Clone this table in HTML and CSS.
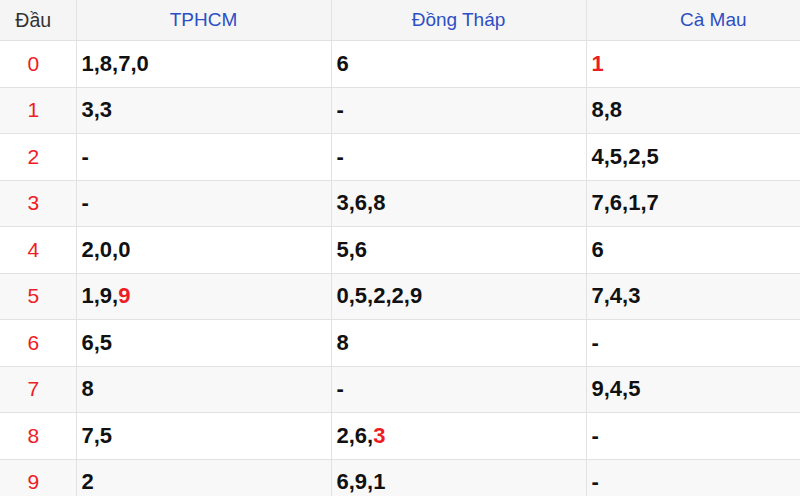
FILE: index.html
```html
<!DOCTYPE html>
<html lang="vi">
<head>
<meta charset="utf-8">
<link rel="stylesheet" href="styles.css">
</head>
<body>
<table class="loto">
  <colgroup>
    <col class="c-dau"><col class="c-prov"><col class="c-prov"><col class="c-last">
  </colgroup>
  <thead>
    <tr><th class="dau">Đầu</th><th>TPHCM</th><th>Đồng Tháp</th><th class="last">Cà Mau</th></tr>
  </thead>
  <tbody>
    <tr><td class="dau">0</td><td>1,8,7,0</td><td>6</td><td><span class="hit">1</span></td></tr>
    <tr><td class="dau">1</td><td>3,3</td><td>-</td><td>8,8</td></tr>
    <tr><td class="dau">2</td><td>-</td><td>-</td><td>4,5,2,5</td></tr>
    <tr><td class="dau">3</td><td>-</td><td>3,6,8</td><td>7,6,1,7</td></tr>
    <tr><td class="dau">4</td><td>2,0,0</td><td>5,6</td><td>6</td></tr>
    <tr><td class="dau">5</td><td>1,9,<span class="hit">9</span></td><td>0,5,2,2,9</td><td>7,4,3</td></tr>
    <tr><td class="dau">6</td><td>6,5</td><td>8</td><td>-</td></tr>
    <tr><td class="dau">7</td><td>8</td><td>-</td><td>9,4,5</td></tr>
    <tr><td class="dau">8</td><td>7,5</td><td>2,6,<span class="hit">3</span></td><td>-</td></tr>
    <tr><td class="dau">9</td><td>2</td><td>6,9,1</td><td>-</td></tr>
  </tbody>
</table>
</body>
</html>
```
FILE: styles.css
```css
html, body {
  margin: 0;
  padding: 0;
  background: #ffffff;
  overflow: hidden;
}
body {
  width: 800px;
  height: 496px;
  font-family: "Liberation Sans", Arial, sans-serif;
}
.loto {
  border-collapse: collapse;
  table-layout: fixed;
  width: 800px;
}
.c-dau { width: 76px; }
.c-prov { width: 255px; }
.c-last { width: 214px; }
.loto th {
  height: 40px;
  padding: 0;
  background: #f5f5f5;
  color: #2d4fc4;
  font-size: 19px;
  font-weight: normal;
  text-align: center;
  border: 1px solid #e2e2e2;
  border-top: none;
}
.loto th.dau {
  color: #333333;
  font-size: 19.5px;
  padding-right: 9px;
  border-left: none;
}
.loto th.last {
  padding-left: 40px;
  border-right: none;
}
.loto td {
  height: 45.5px;
  padding: 0 0 0 5px;
  border: 1px solid #e2e2e2;
  font-size: 22px;
  font-weight: bold;
  color: #111111;
  text-align: left;
  vertical-align: middle;
}
.loto td:last-child { border-right: none; }
.loto td.dau {
  padding: 0 9px 0 0;
  border-left: none;
  text-align: center;
  font-weight: normal;
  font-size: 21px;
  color: #ee1c25;
}
.loto tbody tr:nth-child(even) td { background: #f8f8f8; }
.hit { color: #ee1c25; }
```
